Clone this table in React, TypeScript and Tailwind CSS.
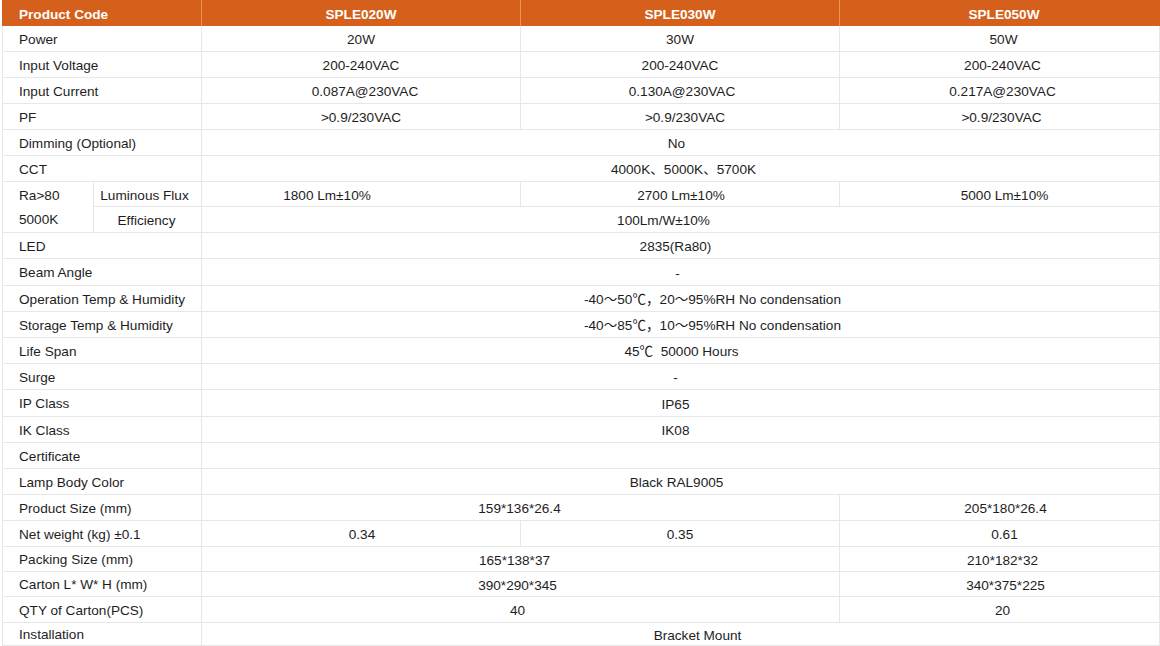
import type { ReactNode } from "react"

// Spec sheet table: 5 grid columns (label a, label b, 3 model columns)
// row heights are taken straight from the reference grid lines.

const line = "border-b border-r border-[#e7e7e7]"

function Label({ children }: { children: ReactNode }) {
  return (
    <div className={`col-span-2 flex items-center border-l pl-[16px] pt-[3px] ${line}`}>
      {children}
    </div>
  )
}

function Val({
  span = "col-span-1",
  className = "",
  children,
}: {
  span?: string
  className?: string
  children?: ReactNode
}) {
  return (
    <div
      className={`${span} flex items-center justify-center whitespace-nowrap pt-[4px] ${line} ${className}`}
    >
      {children}
    </div>
  )
}

function HeadCell({ children, className = "" }: { children: ReactNode; className?: string }) {
  return (
    <div
      className={`flex items-center border-r border-[#ec935a] bg-[#d4601b] pt-[4px] font-bold text-white ${className}`}
    >
      {children}
    </div>
  )
}

export default function App() {
  return (
    <div
      className="h-[646px] w-[1160px] overflow-hidden bg-white pl-[2px] text-[13.6px] text-[#1e1e1e]"
      style={{ fontFamily: '"Liberation Sans", Arial, "Noto Sans CJK SC", sans-serif' }}
    >
      <div className="grid grid-cols-[92px_108px_319px_319px_320px] grid-rows-[26px_26px_26px_26px_26px_26px_26px_25px_26px_26px_27px_26px_26px_26px_26px_27px_26px_26px_26px_26px_26px_25px_25px_26px_23px]">
        {/* header */}
        <HeadCell className="col-span-2 pl-[17px]">Product Code</HeadCell>
        <HeadCell className="justify-center">SPLE020W</HeadCell>
        <HeadCell className="justify-center">SPLE030W</HeadCell>
        <HeadCell className="justify-center border-r-0 pl-[8px]">SPLE050W</HeadCell>

        <Label>Power</Label>
        <Val>20W</Val>
        <Val>30W</Val>
        <Val className="pl-[8px]">50W</Val>

        <Label>Input Voltage</Label>
        <Val>200-240VAC</Val>
        <Val>200-240VAC</Val>
        <Val className="pl-[6px]">200-240VAC</Val>

        <Label>Input Current</Label>
        <Val className="pl-[8px]">0.087A@230VAC</Val>
        <Val className="pl-[4px]">0.130A@230VAC</Val>
        <Val className="pl-[6px]">0.217A@230VAC</Val>

        <Label>PF</Label>
        <Val>&gt;0.9/230VAC</Val>
        <Val className="pl-[10px]">&gt;0.9/230VAC</Val>
        <Val className="pl-[4px]">&gt;0.9/230VAC</Val>

        <Label>Dimming (Optional)</Label>
        <Val span="col-span-3" className="pr-[8px]">No</Val>

        <Label>CCT</Label>
        <Val span="col-span-3" className="pl-[6px]">4000K、5000K、5700K</Val>

        {/* Ra>80 / 5000K spans two rows */}
        <div className={`row-span-2 flex flex-col border-l pl-[16px] pt-[3px] ${line}`}>
          <div className="flex h-[25px] items-center">Ra&gt;80</div>
          <div className="flex h-[26px] items-center">5000K</div>
        </div>
        <Val className="pr-[6px]">Luminous Flux</Val>
        <Val className="pr-[68px]">1800 Lm±10%</Val>
        <Val className="pl-[2px]">2700 Lm±10%</Val>
        <Val className="pl-[10px]">5000 Lm±10%</Val>

        <Val className="pr-[2px]">Efficiency</Val>
        <Val span="col-span-3" className="pr-[34px]">100Lm/W±10%</Val>

        <Label>LED</Label>
        <Val span="col-span-3" className="pr-[10px]">2835(Ra80)</Val>

        <Label>Beam Angle</Label>
        <Val span="col-span-3" className="pr-[6px]">-</Val>

        <Label>Operation Temp &amp; Humidity</Label>
        <Val span="col-span-3" className="pl-[64px]">-40～50℃，20～95%RH No condensation</Val>

        <Label>Storage Temp &amp; Humidity</Label>
        <Val span="col-span-3" className="pl-[64px]">-40～85℃，10～95%RH No condensation</Val>

        <Label>Life Span</Label>
        <Val span="col-span-3" className="pl-[2px]">45℃&nbsp; 50000 Hours</Val>

        <Label>Surge</Label>
        <Val span="col-span-3" className="pr-[10px]">-</Val>

        <Label>IP Class</Label>
        <Val span="col-span-3" className="pr-[10px]">IP65</Val>

        <Label>IK Class</Label>
        <Val span="col-span-3" className="pr-[10px]">IK08</Val>

        <Label>Certificate</Label>
        <Val span="col-span-3" />

        <Label>Lamp Body Color</Label>
        <Val span="col-span-3" className="pr-[8px]">Black RAL9005</Val>

        <Label>Product Size (mm)</Label>
        <Val span="col-span-2" className="pr-[2px]">159*136*26.4</Val>
        <Val className="pl-[12px]">205*180*26.4</Val>

        <Label>Net weight (kg) ±0.1</Label>
        <Val className="pl-[2px]">0.34</Val>
        <Val>0.35</Val>
        <Val className="pl-[10px]">0.61</Val>

        <Label>Packing Size (mm)</Label>
        <Val span="col-span-2" className="pr-[12px]">165*138*37</Val>
        <Val className="pl-[6px]">210*182*32</Val>

        <Label>Carton L* W* H (mm)</Label>
        <Val span="col-span-2" className="pr-[6px]">390*290*345</Val>
        <Val className="pl-[12px]">340*375*225</Val>

        <Label>QTY of Carton(PCS)</Label>
        <Val span="col-span-2" className="pr-[6px]">40</Val>
        <Val className="pl-[6px]">20</Val>

        <Label>Installation</Label>
        <Val span="col-span-3" className="pl-[34px]">Bracket Mount</Val>
      </div>
    </div>
  )
}
